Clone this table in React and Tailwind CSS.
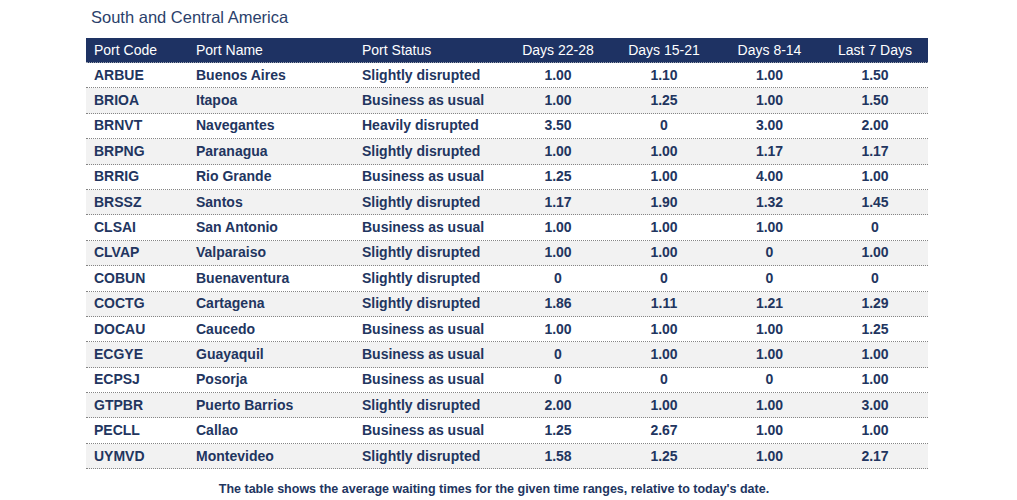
import React from "react";

const ROWS = [
  ["ARBUE", "Buenos Aires", "Slightly disrupted", "1.00", "1.10", "1.00", "1.50"],
  ["BRIOA", "Itapoa", "Business as usual", "1.00", "1.25", "1.00", "1.50"],
  ["BRNVT", "Navegantes", "Heavily disrupted", "3.50", "0", "3.00", "2.00"],
  ["BRPNG", "Paranagua", "Slightly disrupted", "1.00", "1.00", "1.17", "1.17"],
  ["BRRIG", "Rio Grande", "Business as usual", "1.25", "1.00", "4.00", "1.00"],
  ["BRSSZ", "Santos", "Slightly disrupted", "1.17", "1.90", "1.32", "1.45"],
  ["CLSAI", "San Antonio", "Business as usual", "1.00", "1.00", "1.00", "0"],
  ["CLVAP", "Valparaiso", "Slightly disrupted", "1.00", "1.00", "0", "1.00"],
  ["COBUN", "Buenaventura", "Slightly disrupted", "0", "0", "0", "0"],
  ["COCTG", "Cartagena", "Slightly disrupted", "1.86", "1.11", "1.21", "1.29"],
  ["DOCAU", "Caucedo", "Business as usual", "1.00", "1.00", "1.00", "1.25"],
  ["ECGYE", "Guayaquil", "Business as usual", "0", "1.00", "1.00", "1.00"],
  ["ECPSJ", "Posorja", "Business as usual", "0", "0", "0", "1.00"],
  ["GTPBR", "Puerto Barrios", "Slightly disrupted", "2.00", "1.00", "1.00", "3.00"],
  ["PECLL", "Callao", "Business as usual", "1.25", "2.67", "1.00", "1.00"],
  ["UYMVD", "Montevideo", "Slightly disrupted", "1.58", "1.25", "1.00", "2.17"],
];

const HEADERS = ["Port Code", "Port Name", "Port Status", "Days 22-28", "Days 15-21", "Days 8-14", "Last 7 Days"];

const COLS = "grid grid-cols-[102px_166px_151px_106px_106px_105px_106px]";

export default function App() {
  return (
    <div className="w-[1017px] h-[500px] bg-white font-['Liberation_Sans',Arial,sans-serif] overflow-hidden">
      <div className="pl-[91px] pt-[7px] h-[38px] text-[16.5px] leading-[20px] text-[#2b3f6b]">
        South and Central America
      </div>

      <div className="ml-[86px] w-[842px]">
        {/* Header */}
        <div className={`${COLS} h-[25px] items-center bg-[#1e3263] text-white text-[14px] border-b border-dotted border-[#9aa0aa]`}>
          {HEADERS.map((h, i) => (
            <div key={h} className={i < 3 ? "pl-2" : "text-center"}>
              {h}
            </div>
          ))}
        </div>

        {/* Rows */}
        {ROWS.map((row, idx) => (
          <div
            key={row[0]}
            className={`${COLS} h-[25.4px] items-center text-[14px] font-bold text-[#22355f] border-b border-dotted border-[#858585] ${
              idx % 2 === 1 ? "bg-[#f2f2f2]" : "bg-white"
            }`}
          >
            {row.map((cell, i) => (
              <div key={i} className={i < 3 ? "pl-2" : "text-center"}>
                {cell}
              </div>
            ))}
          </div>
        ))}

        <div className="pr-[26px] pt-[11px] text-center text-[12.5px] font-bold text-[#22355f]">
          The table shows the average waiting times for the given time ranges, relative to today's date.
        </div>
      </div>
    </div>
  );
}
